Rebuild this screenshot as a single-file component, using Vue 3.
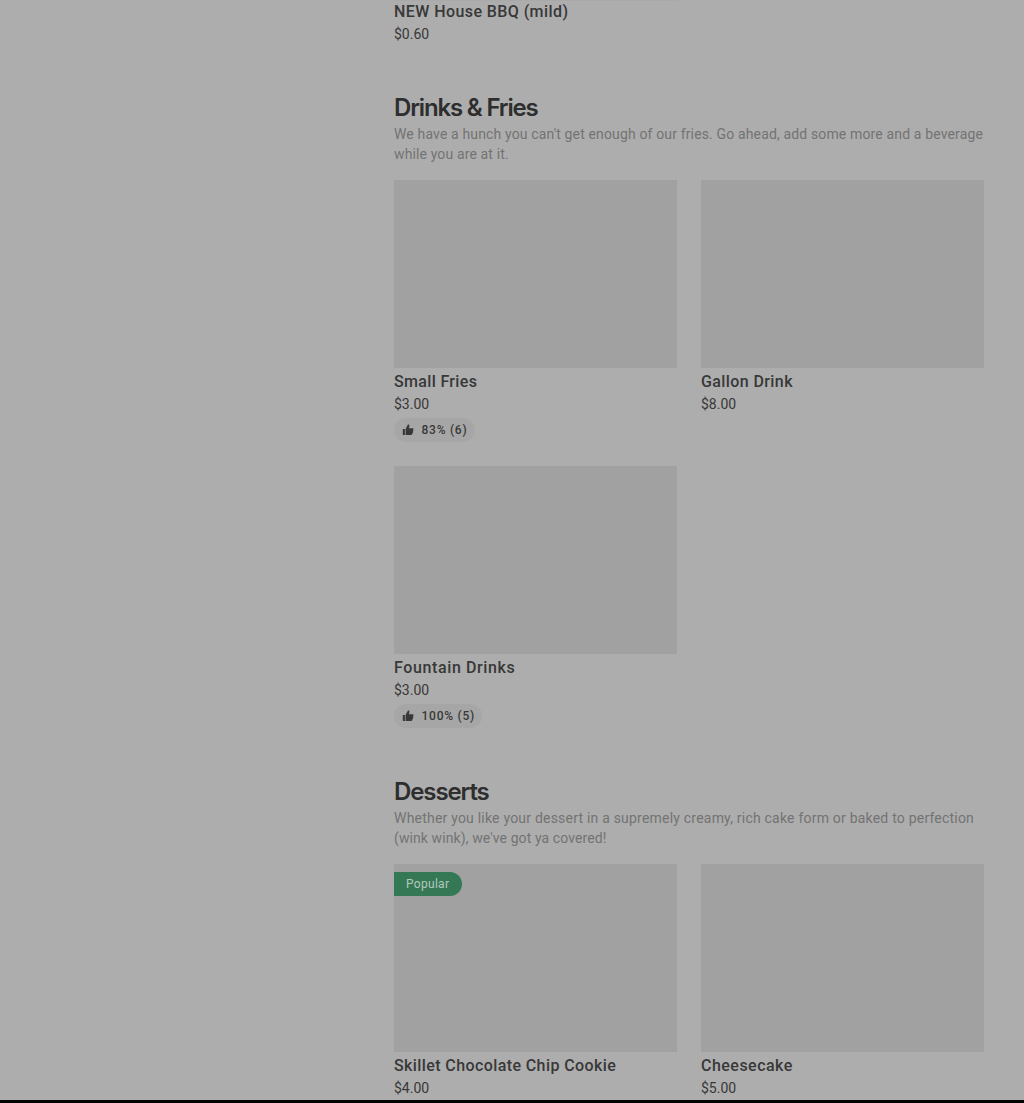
<script setup>
const sections = [
  {
    title: 'Drinks & Fries',
    spacing: -1.16,
    lines: [
      { text: "We have a hunch you can't get enough of our fries. Go ahead, add some more and a beverage", spacing: 0.145 },
      { text: 'while you are at it.', spacing: 0.13 },
    ],
    items: [
      { name: 'Small Fries', price: '$3.00', rating: '83% (6)', spacing: 0.34 },
      { name: 'Gallon Drink', price: '$8.00', spacing: 0.4 },
      { name: 'Fountain Drinks', price: '$3.00', rating: '100% (5)', spacing: 0.62 },
    ],
  },
  {
    title: 'Desserts',
    spacing: -1.1,
    lines: [
      { text: 'Whether you like your dessert in a supremely creamy, rich cake form or baked to perfection', spacing: 0.21 },
      { text: "(wink wink), we've got ya covered!", spacing: 0.1 },
    ],
    items: [
      { name: 'Skillet Chocolate Chip Cookie', price: '$4.00', popular: true, spacing: 0.4 },
      { name: 'Cheesecake', price: '$5.00', spacing: 0.48 },
    ],
  },
]
const track = (v) => ({ letterSpacing: v + 'px' })
</script>

<template>
  <div class="page">
    <main class="menu">
      <div class="previous">
        <div class="name">NEW House BBQ (mild)</div>
        <div class="price">$0.60</div>
      </div>
      <section v-for="s in sections" :key="s.title" class="section">
        <h2 :style="track(s.spacing)">{{ s.title }}</h2>
        <p class="desc">
          <span v-for="l in s.lines" :key="l.text" :style="track(l.spacing)">{{ l.text }}</span>
        </p>
        <div class="grid">
          <article v-for="i in s.items" :key="i.name">
            <div class="photo"><span v-if="i.popular" class="popular">Popular</span></div>
            <div class="name" :style="track(i.spacing)">{{ i.name }}</div>
            <div class="price">{{ i.price }}</div>
            <div v-if="i.rating" class="rating">
              <svg width="12" height="12" viewBox="0 0 12 12" fill="currentColor">
                <path d="M0.8 5h2.1v6H0.8zM3.6 5 5.9 0.6h0.5c.8 0 1.2.6 1 1.4L6.9 4.3h4.5l-.3 4L9.6 11h-6z" />
              </svg>
              <span>{{ i.rating }}</span>
            </div>
          </article>
        </div>
      </section>
    </main>
    <footer class="bar"></footer>
  </div>
</template>

<style>
body { margin: 0; background: #adadad; }
</style>

<style scoped>
.page {
  height: 1103px;
  overflow: hidden;
  background: #adadad;
  color: #383838;
  font-family: Inter, "Liberation Sans", sans-serif;
  display: flex;
  flex-direction: column;
}
.menu {
  height: 1100px;
  overflow: hidden;
  box-sizing: border-box;
  padding: 0 40px 0 394px;
}
.bar { height: 3px; background: #000; }
.previous {
  width: 283px;
  box-shadow: inset 0 1px #a9a9a9;
}
.name {
  font: 500 16px/24px Roboto, sans-serif;
  letter-spacing: 0.42px;
  white-space: nowrap;
}
.price {
  font: 400 14px/20px Roboto, sans-serif;
}
.section { padding-top: 48px; }
h2 {
  margin: 0;
  font-size: 24px;
  line-height: 32px;
  font-weight: 600;
  color: #2e2e2e;
}
.desc {
  margin: 0 0 16px;
  font: 400 14px/20px Roboto, sans-serif;
  color: #737373;
}
.desc span { display: block; white-space: nowrap; }
.grid {
  display: grid;
  grid-template-columns: 283px 283px;
  gap: 24px;
}
.photo {
  height: 188px;
  margin-bottom: 2px;
  background: #a1a1a1;
  display: flow-root;
}
.popular {
  display: block;
  width: 68px;
  height: 24px;
  margin-top: 8px;
  padding-left: 12px;
  box-sizing: border-box;
  border-radius: 0 12px 12px 0;
  background: #347856;
  color: #b5c8bd;
  font: 400 12px/24px Roboto, sans-serif;
  letter-spacing: 0.3px;
}
.rating {
  display: inline-flex;
  align-items: center;
  gap: 7.5px;
  height: 24px;
  margin-top: 4px;
  padding: 0 7.5px 0 8px;
  border-radius: 12px;
  background: #a6a6a6;
  font: 500 12px/24px Roboto, sans-serif;
  letter-spacing: 0.75px;
  vertical-align: top;
}
</style>
